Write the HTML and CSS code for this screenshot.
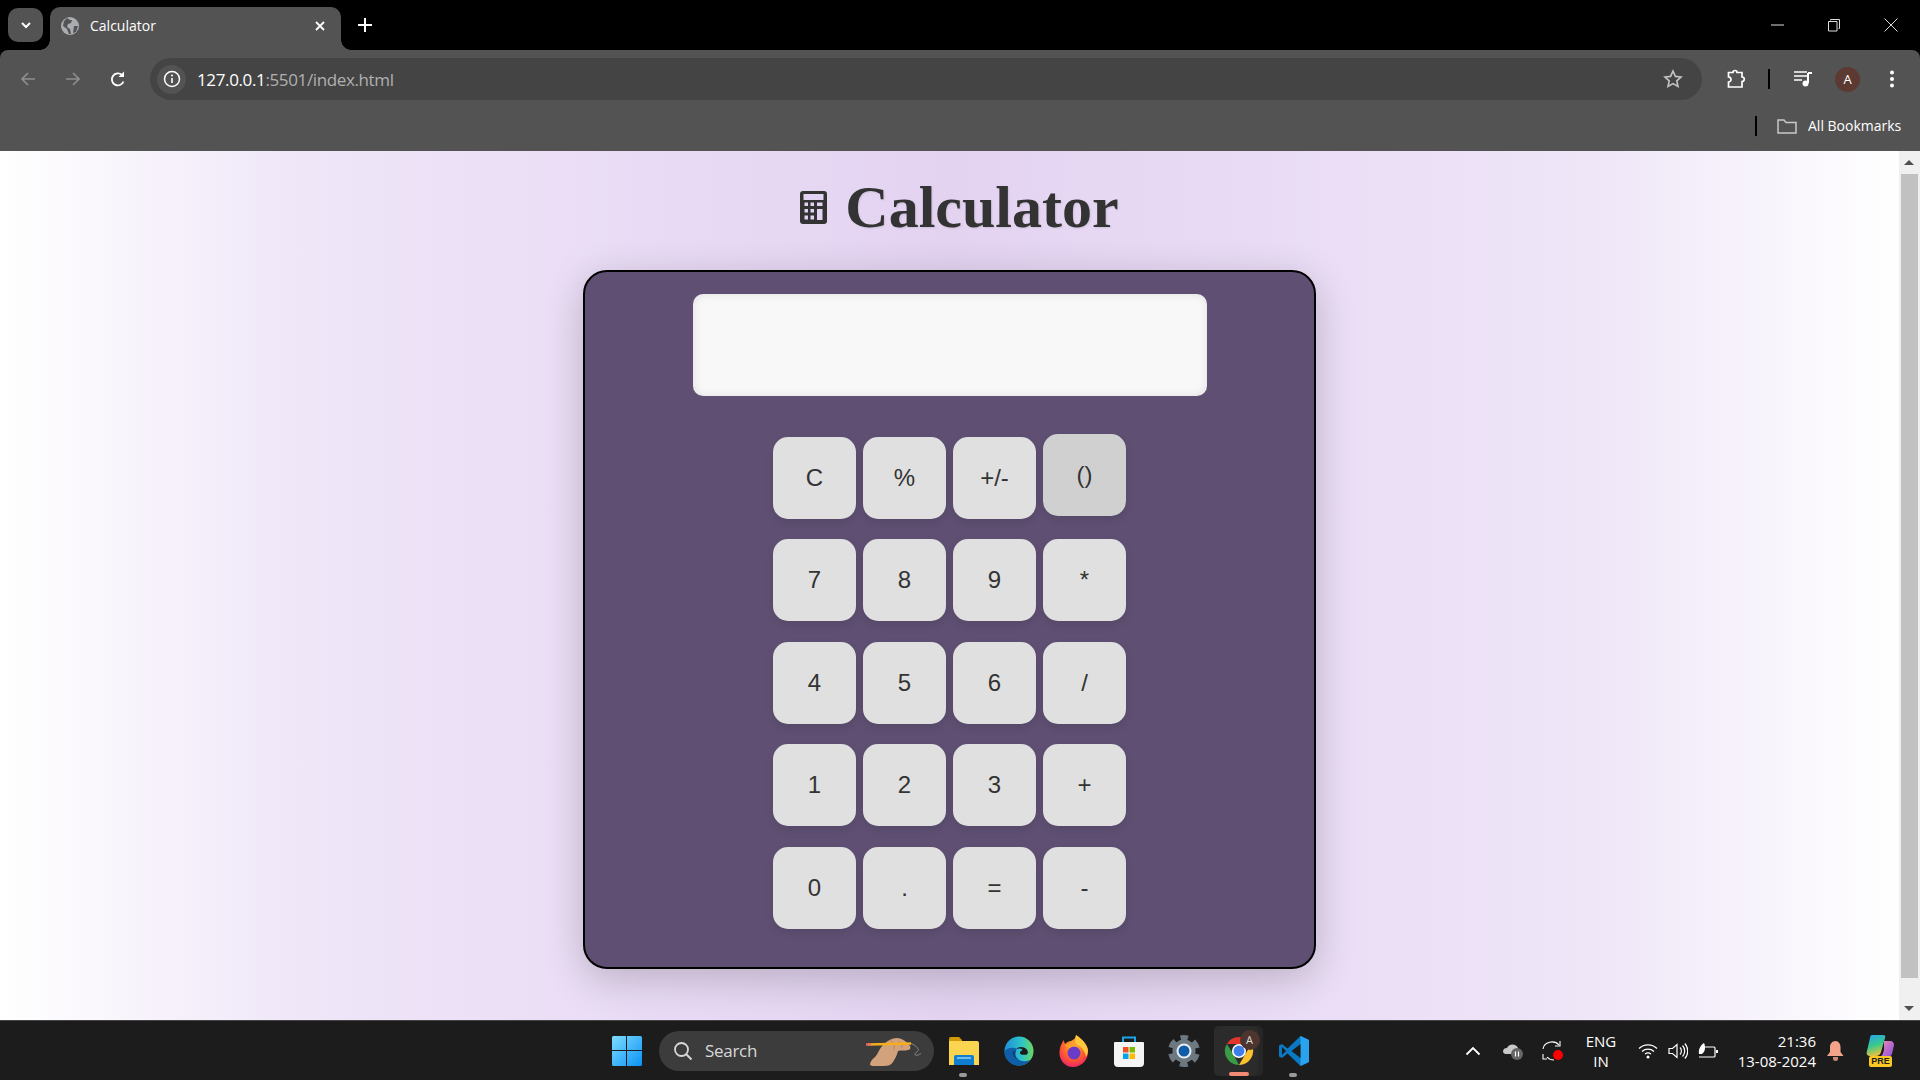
FILE: index.html
```html
<!DOCTYPE html>
<html lang="en">
<head>
    <meta charset="UTF-8">
    <meta name="viewport" content="width=device-width, initial-scale=1.0">
    <title>Calculator</title>
    <link rel="stylesheet" href="styles.css">
</head>
<body>
    <!-- Browser tabs -->
    <div class="tabstrip">
        <div class="tab-search">
            <svg width="14" height="14" viewBox="0 0 14 14"><path d="M3 5l4 4 4-4" fill="none" stroke="#fff" stroke-width="2"/></svg>
        </div>
        <div class="tab">
            <svg class="tab-icon" width="18" height="18" viewBox="0 0 18 18"><circle cx="9" cy="9" r="9" fill="#a9acb0"/><path d="M6 1l3 2 2 0-1 3-3 1-1 3 3 2 1 5-2 0-2-5-4-3 1-5zM13 9l4 0-2 6-3 1z" fill="#535353"/></svg>
            <span class="tab-title">Calculator</span>
            <svg class="tab-close" width="12" height="12" viewBox="0 0 12 12"><path d="M2 2l8 8M10 2l-8 8" stroke="#fff" stroke-width="1.8"/></svg>
        </div>
        <svg class="new-tab" width="16" height="16" viewBox="0 0 16 16"><path d="M8 1v14M1 8h14" stroke="#fff" stroke-width="2"/></svg>
        <div class="win-controls">
            <svg class="win-min" width="14" height="14" viewBox="0 0 14 14"><path d="M0 7h13" stroke="#ddd" stroke-width="1"/></svg>
            <svg class="win-max" width="14" height="14" viewBox="0 0 14 14"><path d="M3.500 2.500v-1h9v9h-1M1.500 3.500h8.500v9.500h-8.500z" fill="none" stroke="#ddd" stroke-width="1"/></svg>
            <svg class="win-close" width="14" height="14" viewBox="0 0 14 14"><path d="M.5.5l13 13M13.500.5l-13 13" stroke="#ddd" stroke-width="1"/></svg>
        </div>
    </div>

    <!-- Address bar -->
    <div class="toolbar">
        <svg class="nav-back" width="18" height="18" viewBox="0 0 18 18"><path d="M16 9H3M9 3L3 9l6 6" fill="none" stroke="#8e8e8e" stroke-width="1.700"/></svg>
        <svg class="nav-forward" width="18" height="18" viewBox="0 0 18 18"><path d="M2 9h13M9 3l6 6-6 6" fill="none" stroke="#8e8e8e" stroke-width="1.700"/></svg>
        <svg class="nav-reload" width="18" height="18" viewBox="0 0 18 18"><path d="M14.500 11.500A6 6 0 1 1 13 5" fill="none" stroke="#fff" stroke-width="1.800"/><path d="M15 1.500v5.500h-5.500z" fill="#fff"/></svg>
        <div class="omnibox">
            <div class="site-info">
                <svg width="18" height="18" viewBox="0 0 18 18"><circle cx="9" cy="9" r="7.500" fill="none" stroke="#fff" stroke-width="1.500"/><path d="M9 8v5" stroke="#fff" stroke-width="1.600"/><circle cx="9" cy="5.500" r="1" fill="#fff"/></svg>
            </div>
            <span class="url"><span class="url-host">127.0.0.1</span>:5501/index.html</span>
            <svg class="star" width="20" height="20" viewBox="0 0 20 20"><path d="M10 2l2.400 5.400 5.600.6-4.200 3.800 1.200 5.700-5-2.900-5 2.900 1.200-5.700L2 8l5.600-.6z" fill="none" stroke="#c4c4c4" stroke-width="1.600"/></svg>
        </div>
        <svg class="tool-ext" width="20" height="20" viewBox="0 0 20 20"><path d="M2.500 3.500h4.500a2 2 0 0 1 4 0h5v4.500a2 2 0 0 1 0 4.500v5.500h-13.500v-5a2.500 2.500 0 0 0 0-5z" fill="none" stroke="#fff" stroke-width="1.700"/></svg>
        <div class="tool-sep"></div>
        <svg class="tool-media" width="20" height="20" viewBox="0 0 20 20"><path d="M1 3h13M1 7h13M1 11h8" stroke="#fff" stroke-width="1.700"/><path d="M15 4v10" stroke="#fff" stroke-width="2"/><path d="M15 3h4v2h-4z" fill="#fff"/><circle cx="12.500" cy="14.500" r="3" fill="#fff"/></svg>
        <div class="avatar">A</div>
        <svg class="tool-menu" width="6" height="20" viewBox="0 0 6 20"><circle cx="3" cy="3.500" r="2" fill="#fff"/><circle cx="3" cy="10" r="2" fill="#fff"/><circle cx="3" cy="16.500" r="2" fill="#fff"/></svg>
    </div>

    <!-- Bookmarks -->
    <div class="bookmarks">
        <div class="bm-sep"></div>
        <svg class="bm-folder" width="20" height="16" viewBox="0 0 20 16"><path d="M1 2h6l2 2.500h10v10.500h-18z" fill="none" stroke="#c9c9c9" stroke-width="1.500"/></svg>
        <span class="bm-label">All Bookmarks</span>
    </div>

    <!-- Page -->
    <div class="viewport">
        <main class="page">
            <h1 class="heading">
                <svg class="heading-icon" width="27" height="33" viewBox="0 0 27 33">
                    <rect width="27" height="33" rx="3" fill="#333"/>
                    <rect x="3.500" y="3" width="20" height="6" fill="#e3d3f2"/>
                    <g fill="#e3d3f2">
                        <rect x="4.500" y="11.500" width="3.500" height="3.500"/><rect x="10.500" y="11.500" width="3.500" height="3.500"/><rect x="17" y="11.500" width="5.500" height="3.500"/>
                        <rect x="4.500" y="18" width="3.500" height="3.500"/><rect x="10.500" y="18" width="3.500" height="3.500"/><rect x="17" y="18" width="5.500" height="11"/>
                        <rect x="4.500" y="24.500" width="3.500" height="4"/><rect x="10.500" y="24.500" width="3.500" height="4"/>
                    </g>
                </svg>
                Calculator
            </h1>
            <div class="calculator">
                <div class="display"></div>
                <div class="keys">
                    <button class="key">C</button>
                    <button class="key">%</button>
                    <button class="key">+/-</button>
                    <button class="key key-hover">()</button>
                    <button class="key">7</button>
                    <button class="key">8</button>
                    <button class="key">9</button>
                    <button class="key">*</button>
                    <button class="key">4</button>
                    <button class="key">5</button>
                    <button class="key">6</button>
                    <button class="key">/</button>
                    <button class="key">1</button>
                    <button class="key">2</button>
                    <button class="key">3</button>
                    <button class="key">+</button>
                    <button class="key">0</button>
                    <button class="key">.</button>
                    <button class="key">=</button>
                    <button class="key">-</button>
                </div>
            </div>
        </main>
        <div class="scrollbar">
            <div class="scroll-btn"><span class="arrow-up"></span></div>
            <div class="scroll-track"><div class="scroll-thumb"></div></div>
            <div class="scroll-btn"><span class="arrow-down"></span></div>
        </div>
    </div>

    <!-- Windows taskbar -->
    <footer class="taskbar">
        <svg class="start" width="30" height="30" viewBox="0 0 30 30">
            <defs><linearGradient id="winBlue" x1="0" y1="0" x2="1" y2="1"><stop offset="0" stop-color="#7fdcff"/><stop offset="1" stop-color="#0a92f5"/></linearGradient></defs>
            <path d="M0 1.500a1.500 1.500 0 0 1 1.500-1.500h12.500v14h-14zM15 0h13.500a1.500 1.500 0 0 1 1.500 1.500v12.500h-15zM0 15h14v15h-12.500a1.500 1.500 0 0 1-1.500-1.500zM15 15h15v13.500a1.500 1.500 0 0 1-1.500 1.500h-13.500z" fill="url(#winBlue)"/>
        </svg>
        <div class="search">
            <svg width="20" height="20" viewBox="0 0 20 20"><circle cx="8.500" cy="8.500" r="6.500" fill="none" stroke="#d8d8d8" stroke-width="1.800"/><path d="M13 13l5.500 5.500" stroke="#d8d8d8" stroke-width="2"/></svg>
            <span class="search-label">Search</span>
            <svg class="search-art" width="60" height="30" viewBox="0 0 60 30">
                <path d="M4 29c0-3 2-6 5-8 3-3 4-8 8-12 4-4 9-7 14-7 5 0 10 4 13 8 1 2 0 4-2 4-3 1-7 0-10 1-1 4-3 8-5 11-2 3-5 4-9 4-5 1-10 1-14-1z" fill="#d2a27d"/>
                <path d="M24 4c3 2 5 6 4 10M32 5c2 1 4 3 4 7" fill="none" stroke="#b98660" stroke-width="1"/>
                <path d="M2 8.500l43-1" stroke="#f5ad1c" stroke-width="2.500"/>
                <path d="M0 8.500h5" stroke="#e26a6a" stroke-width="2.500"/>
                <path d="M45 7.500c3 1 5 3 7 5 2 2-3 4-3 6 1 2 4 0 6-1" fill="none" stroke="#8a8a8a" stroke-width="1"/>
            </svg>
        </div>
        <div class="app-cell">
            <svg width="30" height="28" viewBox="0 0 30 28">
                <path d="M0 2a2 2 0 0 1 2-2h8l3 3v3h-13z" fill="#d49a06"/>
                <path d="M0 4h28a2 2 0 0 1 2 2v22h-30z" fill="#fbd450"/>
                <path d="M5 28v-8a2 2 0 0 1 2-2h16a2 2 0 0 1 2 2v8z" fill="#0f7dd0"/>
                <path d="M8 21h14" stroke="#9fd7f5" stroke-width="1.400"/>
            </svg>
            <span class="app-dot"></span>
        </div>
        <div class="app-cell">
            <svg width="30" height="30" viewBox="0 0 32 32">
                <defs>
                    <linearGradient id="edgeTop" x1="0" y1="0" x2="1" y2="0"><stop offset="0" stop-color="#1c8fd8"/><stop offset=".6" stop-color="#2fc4c9"/><stop offset="1" stop-color="#6bd85f"/></linearGradient>
                </defs>
                <circle cx="16" cy="16" r="15.500" fill="url(#edgeTop)"/>
                <path d="M.5 16c0 9 7 15.500 15.500 15.500 5 0 9-2 12-6-5 2-10 2-13-1-4-3-4-8-1-11-5-2-10-1-13.500 2.500z" fill="#0f5fa8"/>
                <path d="M13 14c2-3 8-3 11 0 2 2 2 5 0 6-3 0-7 0-7-2 0-2 2-2 3-3-2-2-5-2-7-1z" fill="#1c1c1c"/>
                <path d="M13 15c-2 4-1 8 2 10-3-1-6-4-6-8z" fill="#123f78"/>
            </svg>
        </div>
        <div class="app-cell">
            <svg width="30" height="32" viewBox="0 0 30 32">
                <defs>
                    <radialGradient id="foxBody" cx=".5" cy=".35" r=".75"><stop offset="0" stop-color="#ffbd2e"/><stop offset=".55" stop-color="#ff5a2d"/><stop offset="1" stop-color="#e3127d"/></radialGradient>
                </defs>
                <path d="M1.500 11l3-6 1.500 4c2-2 4-3 6-3 3-2 5-3 5-6 6 4 11 9 12 15 1 9-6 17-15 17S0 24 .5 17c0-2 .5-4 1-6z" fill="url(#foxBody)"/>
                <path d="M17 0c6 4 11 9 12 15 0 3-1 5-2 7-1-6-4-10-10-13-1-2-1-6 0-9z" fill="#ffc93c"/>
                <circle cx="15" cy="18" r="6.500" fill="#6a3bc8"/>
                <path d="M6 10c4-2 8-3 12 0-3 0-6 1-7 3-2 0-4-1-5-3z" fill="#ff9a2e"/>
            </svg>
        </div>
        <div class="app-cell">
            <svg width="30" height="32" viewBox="0 0 30 32">
                <path d="M9 7V2.500h12V7" fill="none" stroke="#1aa5e8" stroke-width="2"/>
                <path d="M1 7h28a1 1 0 0 1 1 1v20a4 4 0 0 1-4 4H4a4 4 0 0 1-4-4V8a1 1 0 0 1 1-1z" fill="#f4f4f4"/>
                <rect x="9" y="12" width="5.500" height="5.500" fill="#f25022"/><rect x="15.500" y="12" width="5.500" height="5.500" fill="#7fba00"/>
                <rect x="9" y="18.500" width="5.500" height="5.500" fill="#00a4ef"/><rect x="15.500" y="18.500" width="5.500" height="5.500" fill="#ffb900"/>
            </svg>
        </div>
        <div class="app-cell">
            <svg width="32" height="32" viewBox="0 0 32 32">
                <circle cx="16" cy="16" r="11.500" fill="#6d7981"/>
                <circle cx="16" cy="16" r="13" fill="none" stroke="#6d7981" stroke-width="6" stroke-dasharray="7.600 6" stroke-dashoffset="3.800" transform="rotate(-90 16 16)"/>
                <circle cx="16" cy="16" r="7.500" fill="#e8eef2"/>
                <circle cx="16" cy="16" r="5.500" fill="#0f5ca8"/>
            </svg>
        </div>
        <div class="app-cell chrome-cell">
            <div class="chrome-tile">
                <svg width="30" height="30" viewBox="0 0 32 32">
                    <path d="M3 8.500A15 15 0 0 1 29 8.500H16z" fill="#e0362c"/>
                    <path d="M29 8.500A15 15 0 0 1 16 31l7-12z" fill="#fbc02d"/>
                    <path d="M16 31A15 15 0 0 1 3 8.500l7 11z" fill="#3a9b46"/>
                    <circle cx="16" cy="16" r="7.500" fill="#fff"/>
                    <circle cx="16" cy="16" r="5.800" fill="#3d7fe8"/>
                </svg>
                <span class="chrome-badge">A</span>
                <span class="chrome-bar"></span>
            </div>
        </div>
        <div class="app-cell">
            <svg width="30" height="30" viewBox="0 0 30 30">
                <path d="M21.500 0L30 4v22l-8.500 4L8.500 17.500 3 22 0 20.500v-11L3 8l5.500 4.500z" fill="#0a78c2"/>
                <path d="M21.500 0L30 4v22l-8.500 4z" fill="#2aa3ee"/>
                <path d="M21.500 8l-9 7 9 7z" fill="#1c1c1c"/>
                <path d="M3 11v8l4-4z" fill="#1c1c1c"/>
            </svg>
            <span class="app-dot"></span>
        </div>
        <div class="tray">
            <div class="tray-cell tray-wide">
                <svg width="16" height="10" viewBox="0 0 16 10"><path d="M1.500 8.500L8 2l6.500 6.500" fill="none" stroke="#fff" stroke-width="1.800"/></svg>
            </div>
            <div class="tray-cell tray-wide">
                <svg width="22" height="20" viewBox="0 0 22 20"><path d="M1 11a4 4 0 0 1 4-4 6 6 0 0 1 11 0v4a3 3 0 0 1-3 2H4a3 3 0 0 1-3-2z" fill="#c9c9c9"/><circle cx="15" cy="13" r="6" fill="#666"/><path d="M13.500 10.500v5M16.500 10.500v5" stroke="#fff" stroke-width="1.200"/></svg>
            </div>
            <div class="tray-cell tray-wide">
                <svg width="22" height="22" viewBox="0 0 22 22"><path d="M1 9a9 8 0 0 1 16-4M5 17a9 8 0 0 0 7 3" fill="none" stroke="#fff" stroke-width="1.100"/><path d="M18 1v5h-5M1 14v5h4" fill="none" stroke="#fff" stroke-width="1.100"/><circle cx="16" cy="15" r="5" fill="#f00"/></svg>
            </div>
            <div class="tray-lang"><span>ENG</span><span>IN</span></div>
            <div class="tray-cell">
                <svg width="20" height="16" viewBox="0 0 20 16"><path d="M1 5.500a13 13 0 0 1 18 0M4 8.500a9 9 0 0 1 12 0M7 11a5 5 0 0 1 6 0" fill="none" stroke="#fff" stroke-width="1.300"/><circle cx="10" cy="14" r="1.500" fill="#fff"/></svg>
            </div>
            <div class="tray-cell">
                <svg width="20" height="18" viewBox="0 0 20 18"><path d="M1 6.500h3.500L9 2.500v13l-4.500-4H1z" fill="none" stroke="#fff" stroke-width="1.200"/><path d="M12 5.500a5 5 0 0 1 0 7M14.500 3.500a8 8 0 0 1 0 11M16.800 1.500a11 11 0 0 1 0 15" fill="none" stroke="#fff" stroke-width="1.200"/></svg>
            </div>
            <div class="tray-cell">
                <svg width="20" height="18" viewBox="0 0 20 18"><path d="M6 5h10a1 1 0 0 1 1 1v8a1 1 0 0 1-1 1H1" fill="none" stroke="#fff" stroke-width="1.200"/><path d="M18 8h2v3h-2z" fill="#fff"/><path d="M1 12c-1-5 2-9 5-11 2 4 1 9-2 11z" fill="#fff"/></svg>
            </div>
            <div class="clock"><span>21:36</span><span>13-08-2024</span></div>
            <div class="tray-bell">
                <svg width="17" height="20" viewBox="0 0 17 20"><path d="M8.500 0c3 0 5 3 5 6v5l3 4H0l3-4V6c0-3 2-6 5.500-6z" fill="#f4a488"/><path d="M6 16h5v1.500a2.500 2.500 0 0 1-5 0z" fill="#c9886f"/></svg>
            </div>
            <div class="tray-copilot">
                <svg width="28" height="22" viewBox="0 0 28 22">
                    <defs>
                        <linearGradient id="copA" x1=".2" y1="0" x2=".5" y2="1"><stop offset="0" stop-color="#27a4e8"/><stop offset=".5" stop-color="#37c98d"/><stop offset="1" stop-color="#f2c23c"/></linearGradient>
                        <linearGradient id="copB" x1="0" y1="0" x2="1" y2="1"><stop offset="0" stop-color="#f08bb4"/><stop offset="1" stop-color="#8a4be0"/></linearGradient>
                    </defs>
                    <path d="M6 0h11c2 0 3 1 2 3L15 17c-1 3-3 4-5 4H5c-4 0-5-2-4-5L4 3c0-2 1-3 2-3z" fill="url(#copA)"/>
                    <path d="M18 6h6c3 0 4 2 4 4l-2 9c-1 2-2 3-4 3h-8c3-2 3-4 4-7z" fill="url(#copB)"/>
                </svg>
                <span class="pre-badge">PRE</span>
            </div>
        </div>
    </footer>
</body>
</html>
```

FILE: styles.css
```css
* {
    box-sizing: border-box;
}

html, body {
    margin: 0;
    height: 100%;
    overflow: hidden;
}

body {
    display: flex;
    flex-direction: column;
    height: 1080px;
    font-family: 'Open Sans', sans-serif;
    background-color: #000;
}

svg {
    display: block;
    flex-shrink: 0;
}

/* Tabs */
.tabstrip {
    display: flex;
    align-items: flex-start;
    height: 50px;
    background-color: #000;
    flex-shrink: 0;
}

.tab-search {
    display: flex;
    align-items: center;
    justify-content: center;
    width: 35px;
    height: 34px;
    margin: 8px 7px 0 8px;
    background-color: #535353;
    border-radius: 10px;
}

.tab {
    position: relative;
    display: flex;
    align-items: center;
    width: 291px;
    height: 43px;
    margin-top: 7px;
    padding: 0 15px 5px 11px;
    background-color: #535353;
    border-radius: 10px 10px 0 0;
}

.tab::before,
.tab::after {
    content: "";
    position: absolute;
    bottom: 0;
    width: 10px;
    height: 10px;
    background: radial-gradient(circle at 0 0, #000 9.500px, #535353 10px);
}

.tab::before {
    left: -10px;
}

.tab::after {
    right: -10px;
    background: radial-gradient(circle at 100% 0, #000 9.500px, #535353 10px);
}

.tab-title {
    margin: 0 0 2px 11px;
    font-size: 14px;
    color: #fff;
}

.tab-close {
    margin-left: auto;
}

.new-tab {
    margin: 17px 0 0 16px;
}

.win-controls {
    display: flex;
    margin: 18px 22px 0 auto;
    gap: 42px;
}

.win-close {
    margin-left: 1px;
}

/* Toolbar */
.toolbar {
    display: flex;
    align-items: center;
    height: 50px;
    padding-top: 8px;
    background-color: #535353;
    border-radius: 8px 8px 0 0;
    flex-shrink: 0;
}

.nav-back {
    margin-left: 19px;
}

.nav-forward {
    margin-left: 27px;
}

.nav-reload {
    margin-left: 27px;
}

.omnibox {
    display: flex;
    align-items: center;
    width: 1552px;
    height: 42px;
    margin-left: 23px;
    padding: 0 19px 0 7px;
    background-color: #444;
    border-radius: 21px;
}

.site-info {
    display: flex;
    align-items: center;
    justify-content: center;
    width: 29px;
    height: 29px;
    background-color: #535353;
    border-radius: 50%;
}

.url {
    margin-left: 11px;
    font-size: 17px;
    letter-spacing: -0.37px;
    color: #b0b0b0;
}

.url-host {
    color: #fff;
}

.star {
    margin-left: auto;
}

.tool-ext {
    margin-left: 24px;
}

.tool-sep {
    width: 2px;
    height: 20px;
    margin-left: 22px;
    background-color: #000;
}

.tool-media {
    margin-left: 23px;
}

.avatar {
    display: flex;
    align-items: center;
    justify-content: center;
    width: 25px;
    height: 25px;
    margin-left: 22px;
    font-size: 13px;
    color: #fff;
    background-color: #5c3a32;
    border-radius: 50%;
}

.tool-menu {
    margin-left: 29px;
}

/* Bookmarks */
.bookmarks {
    display: flex;
    align-items: center;
    height: 51px;
    background-color: #535353;
    flex-shrink: 0;
}

.bm-sep {
    width: 2px;
    height: 20px;
    margin-left: 1755px;
    background-color: #000;
}

.bm-folder {
    margin-left: 20px;
}

.bm-label {
    margin-left: 11px;
    font-size: 14px;
    color: #fff;
    white-space: nowrap;
}

/* Page area */
.viewport {
    display: flex;
    flex: 1;
    min-height: 0;
}

.page {
    display: flex;
    flex-direction: column;
    align-items: center;
    width: 1899px;
    background: linear-gradient(to right, #fff, #efe6f8 16%, #e9dbf5 34%, #e3d3f1 50%, #e9dbf5 66%, #efe6f8 84%, #fff);
}

.heading {
    display: flex;
    align-items: center;
    gap: 18px;
    height: 119px;
    margin: 0;
    padding: 0 0 7px 20px;
    font-family: 'Liberation Serif', serif;
    font-size: 60px;
    font-weight: bold;
    color: #333;
    text-shadow: 1px 1px 2px rgba(0, 0, 0, 0.1);
}

.calculator {
    display: flex;
    flex-direction: column;
    align-items: center;
    width: 733px;
    height: 699px;
    padding-top: 22px;
    background-color: #5f5073;
    border: 2px solid #000;
    border-radius: 24px;
    box-shadow: 0 10px 40px rgba(0, 0, 0, 0.2);
}

.display {
    width: 514px;
    height: 102px;
    background-color: #f8f8f8;
    border-radius: 10px;
    box-shadow: inset 0 0 10px rgba(0, 0, 0, 0.1);
}

.keys {
    display: grid;
    grid-template-columns: repeat(4, 83px);
    grid-auto-rows: 82px;
    column-gap: 7px;
    row-gap: 20.4px;
    margin-top: 41px;
}

.key {
    padding: 0;
    font-family: 'Liberation Sans', Arial, sans-serif;
    font-size: 24px;
    color: #333;
    background-color: #e0e0e0;
    border: none;
    border-radius: 15px;
    box-shadow: 0 4px 8px rgba(0, 0, 0, 0.1);
}

.key-hover {
    background-color: #d0d0d0;
    transform: translateY(-3px);
}

/* Scrollbar */
.scrollbar {
    display: flex;
    flex-direction: column;
    width: 21px;
    padding-right: 1px;
    background-color: #f0f0f0;
}

.scroll-btn {
    display: flex;
    align-items: center;
    justify-content: center;
    height: 23px;
}

.arrow-up,
.arrow-down {
    width: 0;
    height: 0;
    border-left: 5px solid transparent;
    border-right: 5px solid transparent;
}

.arrow-up {
    border-bottom: 5px solid #505050;
}

.arrow-down {
    border-top: 5px solid #505050;
}

.scroll-track {
    flex: 1;
    padding: 0 1px 0 2px;
}

.scroll-thumb {
    height: 804px;
    background-color: #c1c1c1;
}

/* Taskbar */
.taskbar {
    display: flex;
    align-items: center;
    height: 60px;
    padding-left: 612px;
    background-color: #1c1c1c;
    border-top: 1px solid #444;
    flex-shrink: 0;
}

.search {
    display: flex;
    align-items: center;
    width: 275px;
    height: 40px;
    margin: 0 2px 0 17px;
    padding-left: 14px;
    background-color: #3c3c3c;
    border-radius: 20px;
}

.search-label {
    margin-left: 12px;
    font-size: 17px;
    letter-spacing: -0.3px;
    color: #d8d8d8;
}

.search-art {
    margin-left: auto;
    margin-right: 8px;
}

.app-cell {
    position: relative;
    display: flex;
    align-items: center;
    justify-content: center;
    width: 55px;
    height: 59px;
}

.app-dot {
    position: absolute;
    left: 23px;
    bottom: 3px;
    width: 8px;
    height: 4px;
    background-color: #9a9a9a;
    border-radius: 2px;
}

.chrome-tile {
    position: relative;
    display: flex;
    align-items: center;
    justify-content: center;
    width: 44px;
    height: 50px;
    margin-right: 6px;
    padding-left: 6px;
    background-color: #2b2b2b;
    border-radius: 5px;
    box-shadow: 5px 0 0 #262626;
}

.chrome-badge {
    position: absolute;
    top: 4px;
    right: -2px;
    display: flex;
    align-items: center;
    justify-content: center;
    width: 20px;
    height: 20px;
    font-size: 11px;
    color: #ddd;
    background-color: #4e342e;
    border-radius: 50%;
}

.chrome-bar {
    position: absolute;
    left: 15px;
    bottom: 0;
    width: 20px;
    height: 4px;
    background-color: #f28b74;
    border-radius: 2px;
}

.tray {
    display: flex;
    align-items: center;
    height: 100%;
    margin-left: auto;
    padding-right: 14px;
}

.tray-cell {
    display: flex;
    align-items: center;
    justify-content: center;
    width: 30px;
}

.tray-wide {
    width: 40px;
}

.tray-lang {
    display: flex;
    flex-direction: column;
    align-items: center;
    width: 56px;
    margin-right: 4px;
    font-size: 15px;
    line-height: 20px;
    color: #fff;
}

.clock {
    display: flex;
    flex-direction: column;
    align-items: flex-end;
    width: 93px;
    font-size: 15px;
    line-height: 20px;
    color: #fff;
}

.tray-bell {
    display: flex;
    justify-content: center;
    width: 38px;
}

.tray-copilot {
    position: relative;
    display: flex;
    justify-content: center;
    width: 52px;
    height: 32px;
}

.pre-badge {
    position: absolute;
    left: 15px;
    bottom: 0;
    width: 23px;
    height: 11px;
    font-family: 'Liberation Sans', sans-serif;
    font-size: 9px;
    font-weight: bold;
    line-height: 11px;
    text-align: center;
    color: #222;
    background-color: #f9c823;
    border-radius: 2px;
}
```
